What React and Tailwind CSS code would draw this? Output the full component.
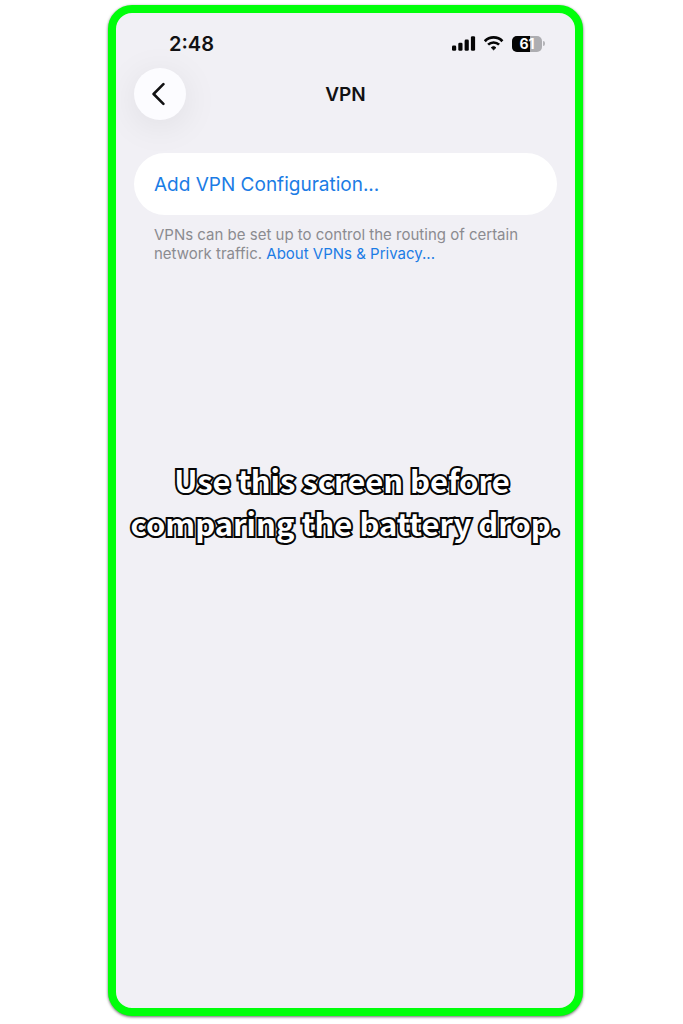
function SignalIcon() {
  return (
    <svg width="24" height="16" viewBox="0 0 24 16" fill="#050505" aria-hidden="true">
      <rect x="0" y="9.6" width="4.2" height="5.2" rx="1.3" />
      <rect x="6.3" y="6.8" width="4.2" height="8" rx="1.3" />
      <rect x="12.6" y="3.6" width="4.2" height="11.2" rx="1.3" />
      <rect x="18.9" y="0.2" width="4.2" height="14.6" rx="1.3" />
    </svg>
  );
}

function WifiIcon() {
  return (
    <svg width="20" height="16" viewBox="0 0 20 16" fill="none" stroke="#050505" aria-hidden="true">
      <path d="M0.8 5.2a12.2 12.2 0 0 1 17.6 0" strokeWidth="2.8" />
      <path d="M4.1 8.7a7.8 7.8 0 0 1 11 0" strokeWidth="2.6" />
      <path
        d="M9.6 13.9 7.2 11.6a3.4 3.4 0 0 1 4.8 0Z"
        fill="#050505"
        strokeWidth="0.8"
        strokeLinejoin="round"
      />
    </svg>
  );
}

function Battery({ level }) {
  return (
    <div className="flex items-center gap-px" role="img" aria-label={`Battery ${level}%`}>
      <div className="relative flex h-4 w-[30px] items-center justify-center overflow-hidden rounded-[5px] bg-[#adadb1]">
        <div className="absolute inset-y-0 left-0 bg-[#050505]" style={{ width: `${level}%` }} />
        <span className="relative text-[14px] leading-4 font-bold text-white">{level}</span>
      </div>
      <div className="h-[5px] w-[2px] rounded-r-full bg-[#b4b4b8]" />
    </div>
  );
}

export default function App() {
  return (
    <main className="flex min-h-screen bg-white pt-[5px] pr-[100px] pb-2 pl-[108px] font-['Inter',sans-serif] text-[#111113]">
      <div className="flex min-w-0 flex-1 flex-col rounded-[24px] border-8 border-[#00ff0a] bg-[#f1f0f5] shadow-[0_1px_3px_rgba(0,0,0,0.6)]">
        <div className="flex items-center justify-between pt-[18px] pr-[30px] pl-[53px]">
          <span className="pt-px text-[20px] leading-6 font-semibold">2:48</span>
          <div className="flex items-center gap-2">
            <SignalIcon />
            <WifiIcon />
            <Battery level={61} />
          </div>
        </div>

        <header className="mt-3 grid grid-cols-[52px_1fr_52px] items-center px-[18px]">
          <button
            type="button"
            aria-label="Back"
            className="flex size-[52px] items-center justify-center rounded-full bg-[#fcfcff] shadow-[0_6px_36px_rgba(0,0,0,0.08)]"
          >
            <svg width="14" height="24" viewBox="0 0 14 24" fill="none" aria-hidden="true" className="mr-1">
              <path
                d="M12.4 2.2 2.6 12l9.8 9.8"
                stroke="#111113"
                strokeWidth="2.6"
                strokeLinecap="round"
                strokeLinejoin="round"
              />
            </svg>
          </button>
          <h1 className="pt-0.5 text-center text-[19px] leading-6 font-semibold">VPN</h1>
        </header>

        <section className="mt-[33px] px-[18px]">
          <button
            type="button"
            className="h-[62px] w-full rounded-full bg-white px-5 pt-0.5 text-left text-[19px] text-[#1b7ce5]"
          >
            Add VPN Configuration...
          </button>
          <p className="mt-[10px] px-5 text-[15px] leading-[19px] text-[#8b8b90]">
            VPNs can be set up to control the routing of certain network traffic.{" "}
            <a href="#privacy" className="text-[#1b7ce5]">
              About VPNs &amp; Privacy...
            </a>
          </p>
        </section>

        <p className="mt-[195px] text-center font-['Noto_Sans_CJK_SC',sans-serif] text-[31px] leading-[43px] font-bold text-white [-webkit-text-stroke:4px_#050505] [paint-order:stroke_fill]">
          Use this screen before&nbsp;
          <br />
          comparing the battery drop.
        </p>
      </div>
    </main>
  );
}
